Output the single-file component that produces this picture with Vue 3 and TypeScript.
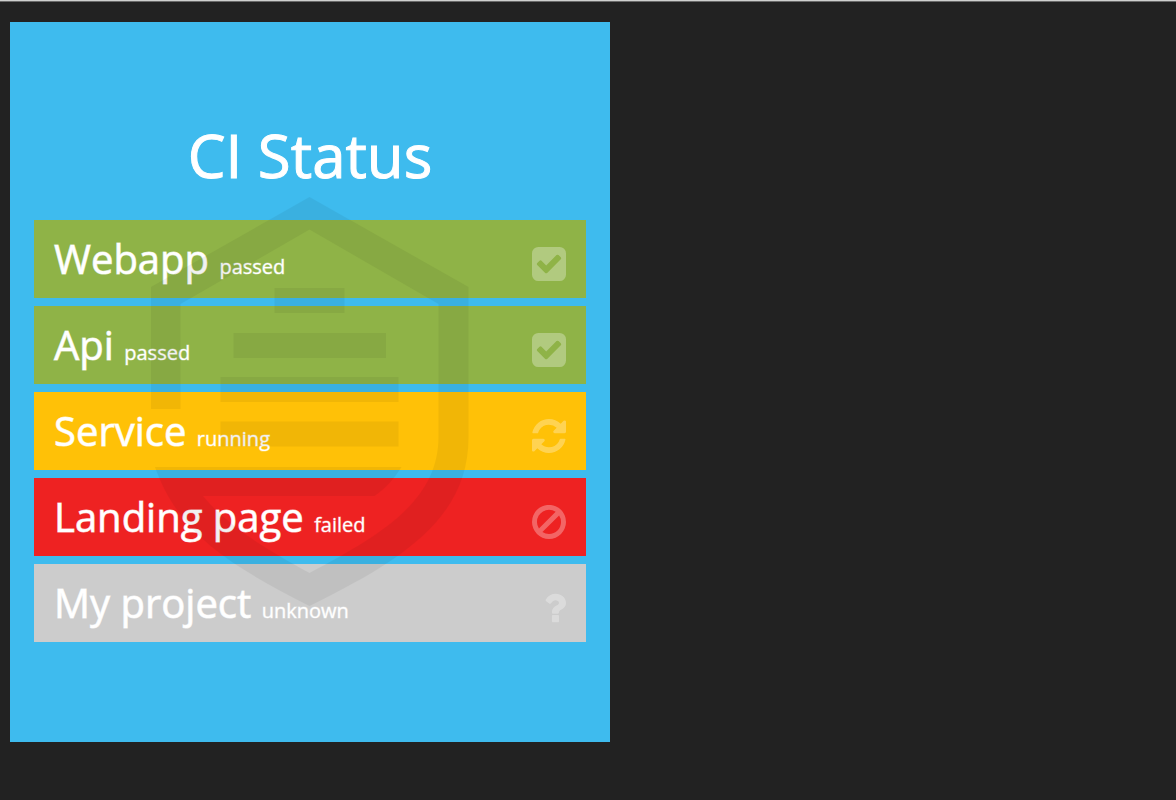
<script setup lang="ts">
type Status = 'passed' | 'running' | 'failed' | 'unknown'

interface Project {
  name: string
  status: Status
}

const projects: Project[] = [
  { name: 'Webapp', status: 'passed' },
  { name: 'Api', status: 'passed' },
  { name: 'Service', status: 'running' },
  { name: 'Landing page', status: 'failed' },
  { name: 'My project', status: 'unknown' },
]

const icons: Record<Status, { viewBox: string; path: string }> = {
  passed: {
    viewBox: '128 128 1536 1536',
    path: 'M814 1299l614-614q19-19 19-45t-19-45l-102-102q-19-19-45-19t-45 19l-467 467-211-211q-19-19-45-19t-45 19l-102 102q-19 19-19 45t19 45l358 358q19 19 45 19t45-19zm850-883v960q0 119-84.5 203.5t-203.5 84.5h-960q-119 0-203.5-84.5t-84.5-203.5v-960q0-119 84.5-203.5t203.5-84.5h960q119 0 203.5 84.5t84.5 203.5z',
  },
  running: {
    viewBox: '128 128 1536 1536',
    path: 'M1639 1056q0 5-1 7-64 268-268 434.5t-478 166.5q-146 0-282.5-55t-243.5-157l-129 129q-19 19-45 19t-45-19-19-45v-448q0-26 19-45t45-19h448q26 0 45 19t19 45-19 45l-137 137q71 66 161 102t187 36q134 0 250-65t186-179q11-17 53-117 8-23 30-23h192q13 0 22.5 9.5t9.5 22.5zm25-800v448q0 26-19 45t-45 19h-448q-26 0-45-19t-19-45 19-45l138-138q-148-137-349-137-134 0-250 65t-186 179q-11 17-53 117-8 23-30 23h-199q-13 0-22.5-9.5t-9.5-22.5v-7q65-268 270-434.5t480-166.5q146 0 284 55.5t245 156.5l130-129q19-19 45-19t45 19 19 45z',
  },
  failed: {
    viewBox: '128 128 1536 1536',
    path: 'M1440 893q0-161-87-295l-754 753q137 89 297 89 111 0 211.5-43.5t173.5-116.5 116-174.5 43-212.5zm-999 299l755-754q-135-91-300-91-148 0-273 73t-198 199-73 274q0 162 89 299zm1223-299q0 157-61 300t-163.5 246-245 164-298.5 61-298.5-61-245-164-163.5-246-61-300 61-299.5 163.5-245.5 245-164 298.5-61 298.5 61 245 164 163.5 245.5 61 299.5z',
  },
  unknown: {
    viewBox: '-132 128 1536 1536',
    path: 'M1088 1256v240q0 16-12 28t-28 12h-240q-16 0-28-12t-12-28v-240q0-16 12-28t28-12h240q16 0 28 12t12 28zm316-600q0 54-15.5 101t-35 76.5-55 59.5-57.5 43.5-61 35.5q-41 23-68.5 65t-27.5 67q0 17-12 32.5t-28 15.5h-240q-15 0-25.5-18.5t-10.5-37.5v-45q0-83 65-156.5t143-108.5q59-27 84-56t25-76q0-42-46.5-74t-107.5-32q-65 0-108 29-35 25-107 115-13 16-31 16-12 0-25-8l-164-125q-13-10-15.5-25t5.5-28q160-266 464-266 80 0 161 31t146 83 106 127.5 41 158.5z',
  },
}
</script>

<template>
  <main class="dashboard">
    <section class="widget" aria-labelledby="widget-title">
      <h1 id="widget-title" class="title">CI Status</h1>
      <ul class="projects">
        <li v-for="project in projects" :key="project.name" class="project" :class="project.status">
          <p class="label">
            {{ project.name }} <small class="status">{{ project.status }}</small>
          </p>
          <svg class="icon" :viewBox="icons[project.status].viewBox" aria-hidden="true">
            <path :d="icons[project.status].path" />
          </svg>
        </li>
      </ul>
      <svg class="shield" viewBox="0 0 318 410" aria-hidden="true">
        <path d="M158.500 0L317.500 90V240C317.500 320 254 362 158.500 409C83 370 29 340 4 270H250.500C243 282 235 291 223.500 299H52C77 329 111 350 158.500 376C230 338 287.500 304 287.500 240V107L158.500 32.500L29.500 107V212H0V90Z" />
        <path d="M123.500 91h70v25h-70zM82.500 136h152.500v25H82.500zM69.500 180h178v25h-178zM69.500 224.500h178v25h-178z" />
      </svg>
    </section>
  </main>
</template>

<style>
body {
  margin: 0;
  background: #222;
}
</style>

<style scoped>
.dashboard {
  box-sizing: border-box;
  min-height: 100vh;
  padding: 20px 10px;
  border-top: 2px solid #8f8f8f;
  border-image: linear-gradient(#cfd0cf 1px, #6a6a6a 1px) 2 0 0 0;
  background: #222;
  color: #fff;
  font-family: "Open Sans", "Noto Sans", sans-serif;
}

.widget {
  position: relative;
  box-sizing: border-box;
  display: flex;
  flex-direction: column;
  justify-content: center;
  width: 100%;
  max-width: 600px;
  min-height: 720px;
  padding: 24px;
  background: #3ebbee;
}

.title {
  margin: 0 0 32px;
  font-size: 60px;
  font-weight: 400;
  line-height: 66px;
  text-align: center;
  -webkit-text-stroke: 1px #fff;
}

.projects {
  display: flex;
  flex-direction: column;
  gap: 8px;
  margin: 0;
  padding: 0;
  list-style: none;
}

.project {
  display: flex;
  align-items: center;
  justify-content: space-between;
  padding: 10px 20px;
}

.passed {
  background: #8fb347;
}

.running {
  background: #ffc107;
}

.failed {
  background: #ee2222;
}

.unknown {
  background: #ccc;
}

.label {
  margin: 0;
  font-size: 40px;
  line-height: 58px;
  -webkit-text-stroke: 1px rgba(255, 255, 255, 0.7);
}

.status {
  font-size: 20px;
  line-height: 20px;
  -webkit-text-stroke: 1px rgba(255, 255, 255, 0.4);
}

.icon {
  flex: none;
  width: 34px;
  height: 34px;
  margin-top: 10px;
  fill: #fff;
  opacity: 0.3;
}

.shield {
  position: absolute;
  top: 175px;
  left: 50%;
  width: 318px;
  height: 410px;
  margin-left: -159px;
  fill: #000;
  opacity: 0.05;
  pointer-events: none;
}
</style>
